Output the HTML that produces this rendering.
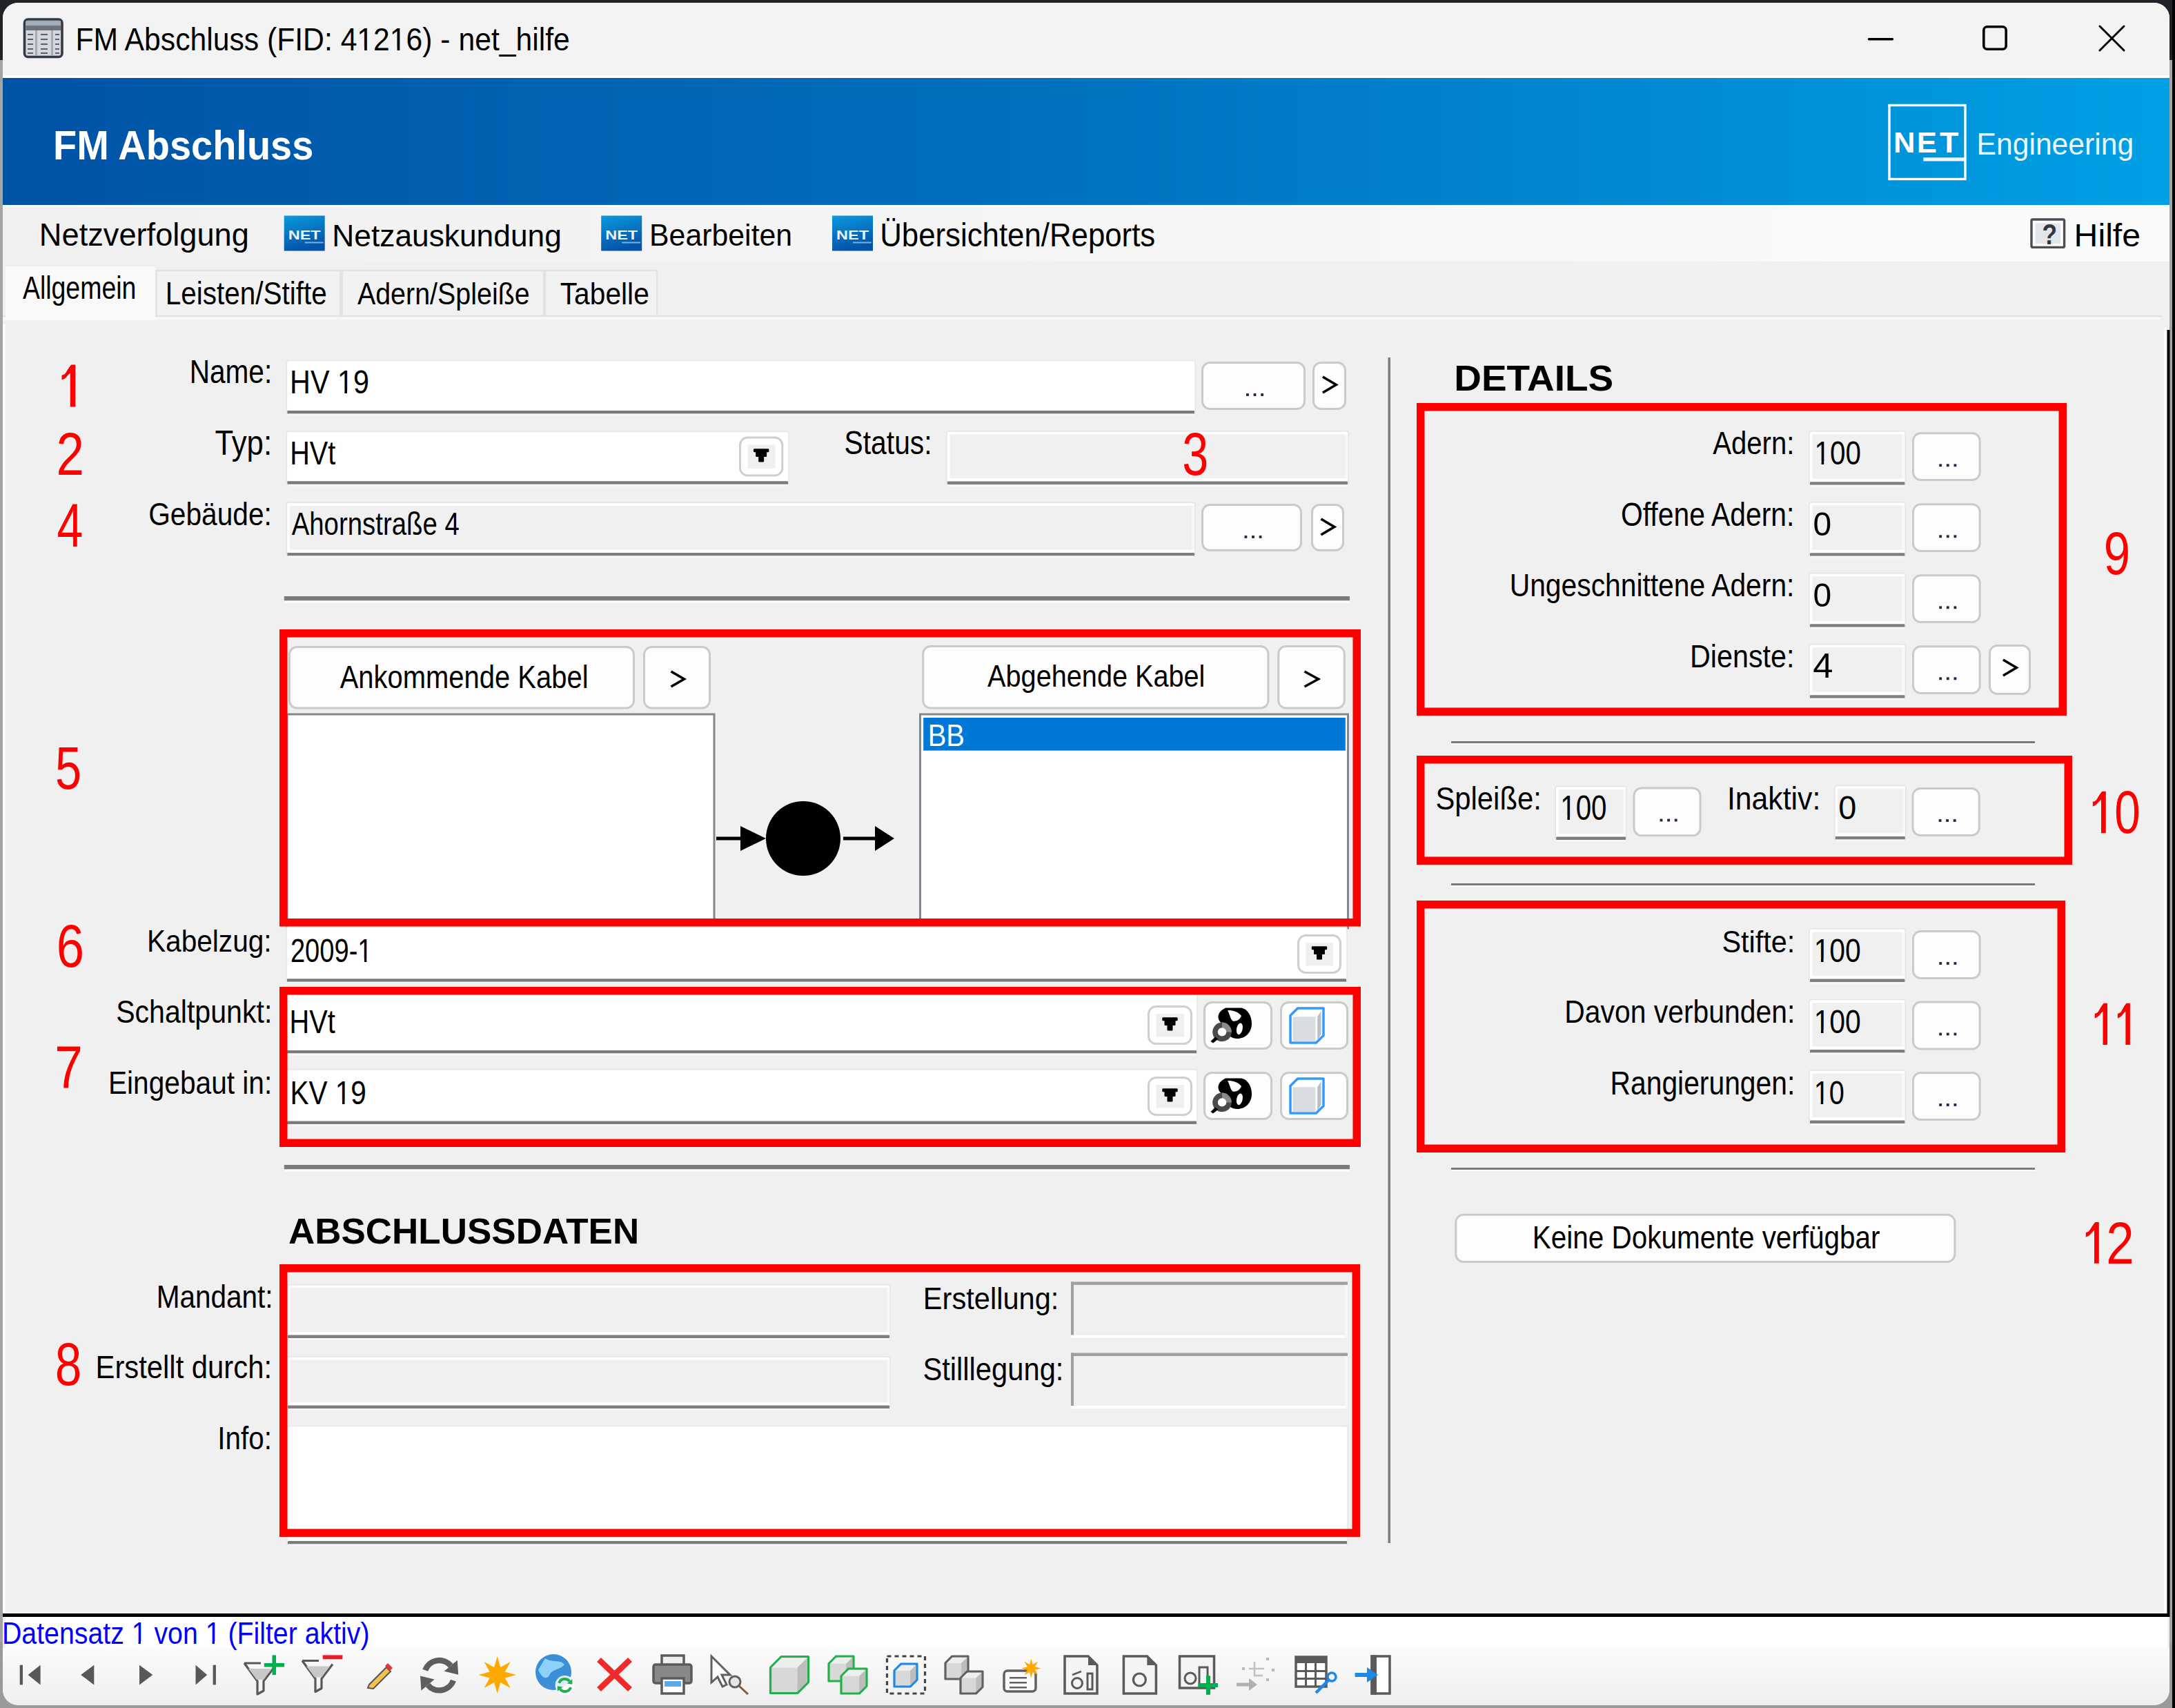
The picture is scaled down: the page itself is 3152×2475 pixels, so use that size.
<!DOCTYPE html>
<html><head><meta charset="utf-8"><title>FM Abschluss</title>
<style>html,body{margin:0;padding:0;background:#202020;overflow:hidden;width:3152px;height:2475px}svg{display:block}text{font-family:"Liberation Sans",sans-serif;white-space:pre}</style>
</head><body>
<svg width="3152" height="2475" viewBox="0 0 3152 2475" font-family="Liberation Sans, sans-serif">
<defs>
<linearGradient id="hdr" x1="0" y1="0" x2="1" y2="0">
 <stop offset="0" stop-color="#0052a4"/><stop offset="0.5" stop-color="#0072c0"/><stop offset="1" stop-color="#00a0e4"/>
</linearGradient>
<linearGradient id="menu" x1="0" y1="0" x2="1" y2="0">
 <stop offset="0" stop-color="#f0f0f0"/><stop offset="1" stop-color="#fbfbfb"/>
</linearGradient>
<linearGradient id="netico" x1="0" y1="0" x2="0.3" y2="1">
 <stop offset="0" stop-color="#0a9ae0"/><stop offset="1" stop-color="#0553a8"/>
</linearGradient>
<linearGradient id="tbar" x1="0" y1="0" x2="0" y2="1">
 <stop offset="0" stop-color="#fbfbfb"/><stop offset="1" stop-color="#efefef"/>
</linearGradient>
</defs>
<rect x="0" y="0" width="3152" height="2475" fill="#000000" />
<rect x="0" y="0" width="3148" height="87" fill="#1f2227" />
<rect x="0" y="87" width="4" height="2388" fill="#a3a3a3" />
<rect x="3144" y="87" width="4" height="2388" fill="#a3a3a3" />
<rect x="0" y="2380" width="3148" height="95" fill="#9a9a9a" />
<rect x="4" y="4" width="3140" height="2467" rx="22" fill="#f0f0f0"/>
<path d="M4 113 V26 A22 22 0 0 1 26 4 H3122 A22 22 0 0 1 3144 26 V113 Z" fill="#f3f3f3"/>
<rect x="4" y="109" width="3140" height="4" fill="#fcfcfc" />
<rect x="4" y="113" width="3140" height="184" fill="url(#hdr)" />
<rect x="4" y="297" width="3140" height="82" fill="url(#menu)" />
<rect x="4" y="297" width="3140" height="3" fill="#fdfdfd" />
<rect x="4" y="379" width="3140" height="83" fill="#f0f0f0" />
<rect x="35.5" y="28" width="54.5" height="54.5" rx="5" fill="#d3d7de" stroke="#343a45" stroke-width="3.6"/>
<rect x="37.5" y="30" width="50.5" height="7" fill="#a3acb9" />
<rect x="37.5" y="37" width="50.5" height="7" fill="#6c737e" />
<rect x="51" y="44" width="3" height="37" fill="#a8adb5" />
<rect x="74" y="44" width="3" height="37" fill="#a8adb5" />
<rect x="40" y="49" width="8" height="2" fill="#5b616a" />
<rect x="59" y="49" width="10" height="2" fill="#5b616a" />
<rect x="80" y="49" width="6" height="2" fill="#5b616a" />
<rect x="40" y="56" width="8" height="2" fill="#5b616a" />
<rect x="59" y="56" width="10" height="2" fill="#5b616a" />
<rect x="80" y="56" width="6" height="2" fill="#5b616a" />
<rect x="40" y="63" width="8" height="2" fill="#5b616a" />
<rect x="59" y="63" width="10" height="2" fill="#5b616a" />
<rect x="80" y="63" width="6" height="2" fill="#5b616a" />
<rect x="40" y="70" width="8" height="2" fill="#5b616a" />
<rect x="59" y="70" width="10" height="2" fill="#5b616a" />
<rect x="80" y="70" width="6" height="2" fill="#5b616a" />
<rect x="40" y="76" width="8" height="2" fill="#5b616a" />
<rect x="59" y="76" width="10" height="2" fill="#5b616a" />
<rect x="80" y="76" width="6" height="2" fill="#5b616a" />
<text x="109.48" y="73.30" font-size="45.93" font-weight="normal" fill="#000" textLength="716.34" lengthAdjust="spacingAndGlyphs" >FM Abschluss (FID: 41216) - net_hilfe</text>
<rect x="518.29" y="68.91" width="9.81" height="5.79" fill="#f3f3f3"/>
<rect x="531.88" y="68.91" width="9.59" height="5.79" fill="#f3f3f3"/>
<rect x="565.76" y="68.91" width="9.81" height="5.79" fill="#f3f3f3"/>
<rect x="579.35" y="68.91" width="9.59" height="5.79" fill="#f3f3f3"/>
<path d="M2708.5 56.8 H2742.5" stroke="#000" stroke-width="3.4" stroke-linecap="round"/>
<rect x="2874.8" y="38.8" width="32.4" height="32.4" rx="5" fill="none" stroke="#000" stroke-width="3.6"/>
<path d="M3043 38 L3078 73 M3078 38 L3043 73" stroke="#000" stroke-width="2.9" stroke-linecap="round"/>
<text x="77.12" y="231.40" font-size="60.14" font-weight="bold" fill="#ffffff" textLength="377.22" lengthAdjust="spacingAndGlyphs" >FM Abschluss</text>
<rect x="2738" y="152.5" width="110" height="107" fill="none" stroke="#ffffff" stroke-width="3.4"/>
<text x="2743.96" y="220.60" font-size="42.62" font-weight="bold" fill="#ffffff" textLength="31.47" lengthAdjust="spacingAndGlyphs" >N</text>
<text x="2777.85" y="220.60" font-size="42.62" font-weight="bold" fill="#ffffff" textLength="29.18" lengthAdjust="spacingAndGlyphs" >E</text>
<text x="2810.95" y="220.60" font-size="42.62" font-weight="bold" fill="#ffffff" textLength="27.44" lengthAdjust="spacingAndGlyphs" >T</text>
<rect x="2787.4" y="228.3" width="61.59999999999991" height="5.199999999999989" fill="#f0f8fd" />
<text x="2864.48" y="223.70" font-size="43.86" font-weight="normal" fill="#e8f6fd" textLength="227.79" lengthAdjust="spacingAndGlyphs" >Engineering</text>
<text x="56.87" y="356.00" font-size="45.52" font-weight="normal" fill="#000" textLength="304.01" lengthAdjust="spacingAndGlyphs" >Netzverfolgung</text>
<rect x="411.7" y="312.5" width="59" height="51" fill="url(#netico)"/>
<text x="417.7" y="346.5" font-size="19" font-weight="bold" fill="#e6f4fc" textLength="47" lengthAdjust="spacingAndGlyphs">NET</text>
<rect x="441.7" y="350.5" width="27.0" height="2.0" fill="#6fb6e8" />
<text x="481.35" y="356.70" font-size="45.24" font-weight="normal" fill="#000" textLength="332.45" lengthAdjust="spacingAndGlyphs" >Netzauskundung</text>
<rect x="871.2" y="312.5" width="59" height="51" fill="url(#netico)"/>
<text x="877.2" y="346.5" font-size="19" font-weight="bold" fill="#e6f4fc" textLength="47" lengthAdjust="spacingAndGlyphs">NET</text>
<rect x="901.2" y="350.5" width="27.0" height="2.0" fill="#6fb6e8" />
<text x="941.07" y="356.00" font-size="44.83" font-weight="normal" fill="#000" textLength="207.10" lengthAdjust="spacingAndGlyphs" >Bearbeiten</text>
<rect x="1206" y="312.5" width="59" height="51" fill="url(#netico)"/>
<text x="1212" y="346.5" font-size="19" font-weight="bold" fill="#e6f4fc" textLength="47" lengthAdjust="spacingAndGlyphs">NET</text>
<rect x="1236" y="350.5" width="27" height="2.0" fill="#6fb6e8" />
<text x="1275.21" y="356.60" font-size="47.76" font-weight="normal" fill="#000" textLength="399.05" lengthAdjust="spacingAndGlyphs" >Übersichten/Reports</text>
<rect x="2944" y="318" width="47.6" height="40.4" rx="2" fill="#fbfbfc" stroke="#4a4f56" stroke-width="3.4"/>
<rect x="2949.5" y="323.5" width="36.5" height="29.5" fill="#e2e5ea"/>
<text x="2959.61" y="353.70" font-size="43.01" font-weight="bold" fill="#33383e" textLength="21.55" lengthAdjust="spacingAndGlyphs" >?</text>
<text x="3005.62" y="356.70" font-size="46.48" font-weight="normal" fill="#000" textLength="96.45" lengthAdjust="spacingAndGlyphs" >Hilfe</text>
<rect x="226.7" y="392" width="266.6" height="66" fill="#f2f2f2" stroke="#e2e2e2" stroke-width="2.5"/>
<rect x="496" y="392" width="292" height="66" fill="#f2f2f2" stroke="#e2e2e2" stroke-width="2.5"/>
<rect x="790" y="392" width="162" height="66" fill="#f2f2f2" stroke="#e2e2e2" stroke-width="2.5"/>
<rect x="4" y="460" width="3140" height="1883" fill="#f0f0f0" />
<rect x="4" y="457" width="3129" height="2.5" fill="#e3e3e3" />
<rect x="4" y="459.5" width="3127" height="3.5" fill="#f8f8f8" />
<rect x="4" y="470" width="3.5" height="1868" fill="#ffffff" />
<rect x="3136" y="475" width="4" height="1863" fill="#ffffff" />
<rect x="3140.5" y="478" width="4.0" height="1865" fill="#000000" />
<rect x="4" y="2338" width="3140" height="5" fill="#000000" />
<rect x="8" y="384" width="216.8" height="80" fill="#f9f9f9"/>
<rect x="8" y="384" width="216.8" height="2" fill="#e9e9e9" />
<text x="32.91" y="433.00" font-size="45.52" font-weight="normal" fill="#000" textLength="164.48" lengthAdjust="spacingAndGlyphs" >Allgemein</text>
<text x="239.66" y="440.80" font-size="45.66" font-weight="normal" fill="#000" textLength="234.12" lengthAdjust="spacingAndGlyphs" >Leisten/Stifte</text>
<text x="517.90" y="441.00" font-size="44.69" font-weight="normal" fill="#000" textLength="249.86" lengthAdjust="spacingAndGlyphs" >Adern/Spleiße</text>
<text x="811.78" y="441.00" font-size="44.69" font-weight="normal" fill="#000" textLength="129.01" lengthAdjust="spacingAndGlyphs" >Tabelle</text>
<path d="M101.8 589.5 H109.3 V528.5 H103.3 C94.5 538.9 96.8 542.2 89.5 543.8 V550.5 C97.4 548.0 96.9 543.8 101.8 540.7 Z" fill="#ff0000"/>
<text x="81.56" y="687.50" font-size="87.31" font-weight="normal" fill="#ff0000" textLength="40.46" lengthAdjust="spacingAndGlyphs" >2</text>
<text x="82.47" y="791.50" font-size="88.29" font-weight="normal" fill="#ff0000" textLength="37.78" lengthAdjust="spacingAndGlyphs" >4</text>
<text x="80.06" y="1142.80" font-size="87.27" font-weight="normal" fill="#ff0000" textLength="38.05" lengthAdjust="spacingAndGlyphs" >5</text>
<text x="81.68" y="1401.10" font-size="87.89" font-weight="normal" fill="#ff0000" textLength="40.28" lengthAdjust="spacingAndGlyphs" >6</text>
<text x="79.25" y="1576.80" font-size="86.69" font-weight="normal" fill="#ff0000" textLength="40.58" lengthAdjust="spacingAndGlyphs" >7</text>
<text x="79.85" y="2007.00" font-size="87.89" font-weight="normal" fill="#ff0000" textLength="38.58" lengthAdjust="spacingAndGlyphs" >8</text>
<text x="274.65" y="555.00" font-size="48.00" font-weight="normal" fill="#000" textLength="119.52" lengthAdjust="spacingAndGlyphs" >Name:</text>
<text x="311.42" y="658.80" font-size="49.75" font-weight="normal" fill="#000" textLength="82.71" lengthAdjust="spacingAndGlyphs" >Typ:</text>
<text x="215.17" y="760.60" font-size="45.66" font-weight="normal" fill="#000" textLength="178.71" lengthAdjust="spacingAndGlyphs" >Gebäude:</text>
<text x="1223.56" y="658.30" font-size="48.46" font-weight="normal" fill="#000" textLength="127.02" lengthAdjust="spacingAndGlyphs" >Status:</text>
<text x="212.95" y="1379.20" font-size="45.24" font-weight="normal" fill="#000" textLength="180.72" lengthAdjust="spacingAndGlyphs" >Kabelzug:</text>
<text x="168.15" y="1482.10" font-size="46.62" font-weight="normal" fill="#000" textLength="226.19" lengthAdjust="spacingAndGlyphs" >Schaltpunkt:</text>
<text x="156.95" y="1584.50" font-size="45.38" font-weight="normal" fill="#000" textLength="237.34" lengthAdjust="spacingAndGlyphs" >Eingebaut in:</text>
<text x="226.66" y="1894.50" font-size="46.90" font-weight="normal" fill="#000" textLength="168.97" lengthAdjust="spacingAndGlyphs" >Mandant:</text>
<text x="138.55" y="1997.00" font-size="46.76" font-weight="normal" fill="#000" textLength="255.45" lengthAdjust="spacingAndGlyphs" >Erstellt durch:</text>
<text x="315.26" y="2099.60" font-size="45.67" font-weight="normal" fill="#000" textLength="78.61" lengthAdjust="spacingAndGlyphs" >Info:</text>
<text x="1337.87" y="1897.30" font-size="45.24" font-weight="normal" fill="#000" textLength="196.46" lengthAdjust="spacingAndGlyphs" >Erstellung:</text>
<text x="1337.42" y="2000.40" font-size="45.38" font-weight="normal" fill="#000" textLength="204.02" lengthAdjust="spacingAndGlyphs" >Stilllegung:</text>
<rect x="415.4" y="522.4" width="1316.6" height="77.20000000000005" rx="3" fill="#ffffff" stroke="#e6e6e6" stroke-width="1.5"/>
<rect x="416.4" y="595.1" width="1314.6" height="4.5" fill="#7a7a7a" rx="1"/>
<rect x="417.4" y="599.6" width="1312.6" height="3.0" fill="#f7f7f7" />
<text x="420.09" y="570.20" font-size="47.60" font-weight="normal" fill="#000" textLength="114.85" lengthAdjust="spacingAndGlyphs" >HV 19</text>
<rect x="489.80" y="565.68" width="9.57" height="5.92" fill="#ffffff"/>
<rect x="503.02" y="565.68" width="9.34" height="5.92" fill="#ffffff"/>
<rect x="1742.5" y="525.5" width="148" height="67" rx="11" fill="#fdfdfd" stroke="#cacaca" stroke-width="3"/>
<rect x="1806.0" y="570.1" width="3.8" height="3.8" fill="#3a1848"/>
<rect x="1816.6" y="570.1" width="3.8" height="3.8" fill="#3a1848"/>
<rect x="1827.2" y="570.1" width="3.8" height="3.8" fill="#3a1848"/>
<rect x="1903.5" y="525.5" width="46" height="67" rx="11" fill="#fdfdfd" stroke="#cacaca" stroke-width="3"/>
<path d="M1916.9 546 L1936.3 557.5 L1916.9 569" fill="none" stroke="#000" stroke-width="3.6" stroke-linejoin="miter" stroke-miterlimit="3"/>
<rect x="415.4" y="625.3" width="727.6" height="76.5" rx="3" fill="#ffffff" stroke="#e6e6e6" stroke-width="1.5"/>
<rect x="416.4" y="697.3" width="725.6" height="4.5" fill="#7a7a7a" rx="1"/>
<rect x="417.4" y="701.8" width="723.6" height="3.0" fill="#f7f7f7" />
<text x="420.23" y="673.10" font-size="48.15" font-weight="normal" fill="#000" textLength="66.05" lengthAdjust="spacingAndGlyphs" >HVt</text>
<rect x="1072.5" y="634.0" width="61.299999999999955" height="55.0" rx="11" fill="#ffffff" stroke="#cfcfcf" stroke-width="3"/>
<rect x="1083.5" y="644.5" width="39.799999999999955" height="34.5" fill="#efefef" />
<path d="M1093.15 651.5 H1113.15 V654.0 H1109.95 V660.7 H1105.95 V668.3 H1100.3500000000001 V660.7 H1096.3500000000001 V654.0 H1093.15 Z" fill="#000" stroke="#000" stroke-width="2.4" stroke-linejoin="round"/>
<rect x="1372" y="624.8" width="582" height="77.30000000000007" rx="3" fill="#ffffff" stroke="#e4e4e4" stroke-width="1.5"/>
<rect x="1376.5" y="629.3" width="573.0" height="63.80000000000007" fill="#f0f0f0" />
<rect x="1949" y="629.3" width="4" height="63.80000000000007" fill="#f7f7f7" />
<rect x="1373" y="697.6" width="580" height="4.5" fill="#7e7e7e" rx="1"/>
<rect x="1374" y="702.1" width="578" height="3.0" fill="#f7f7f7" />
<text x="1713.23" y="687.90" font-size="87.31" font-weight="normal" fill="#ff0000" textLength="38.05" lengthAdjust="spacingAndGlyphs" >3</text>
<rect x="415.4" y="728.2" width="1316.6" height="77.29999999999995" rx="3" fill="#ffffff" stroke="#e4e4e4" stroke-width="1.5"/>
<rect x="419.9" y="732.7" width="1307.6" height="63.799999999999955" fill="#f0f0f0" />
<rect x="1727" y="732.7" width="4" height="63.799999999999955" fill="#f7f7f7" />
<rect x="416.4" y="801.0" width="1314.6" height="4.5" fill="#7e7e7e" rx="1"/>
<rect x="417.4" y="805.5" width="1312.6" height="3.0" fill="#f7f7f7" />
<text x="422.70" y="775.30" font-size="45.66" font-weight="normal" fill="#000" textLength="243.11" lengthAdjust="spacingAndGlyphs" >Ahornstraße 4</text>
<rect x="1742.5" y="731.5" width="143" height="66" rx="11" fill="#fdfdfd" stroke="#cacaca" stroke-width="3"/>
<rect x="1803.5" y="776.1" width="3.8" height="3.8" fill="#3a1848"/>
<rect x="1814.1" y="776.1" width="3.8" height="3.8" fill="#3a1848"/>
<rect x="1824.7" y="776.1" width="3.8" height="3.8" fill="#3a1848"/>
<rect x="1901.5" y="731.5" width="45" height="66" rx="11" fill="#fdfdfd" stroke="#cacaca" stroke-width="3"/>
<path d="M1914.4 752 L1933.8 763.5 L1914.4 775" fill="none" stroke="#000" stroke-width="3.6" stroke-linejoin="miter" stroke-miterlimit="3"/>
<rect x="411.8" y="864" width="1544.2" height="6.5" fill="#7b7b7b" />
<rect x="411.8" y="870.5" width="1544.2" height="3.5" fill="#fbfbfb" />
<rect x="419.5" y="937.5" width="499" height="88.59999999999991" rx="11" fill="#fdfdfd" stroke="#cacaca" stroke-width="3"/>
<text x="492.70" y="996.60" font-size="45.52" font-weight="normal" fill="#000" textLength="359.82" lengthAdjust="spacingAndGlyphs" >Ankommende Kabel</text>
<rect x="933.5" y="937.5" width="95" height="88.59999999999991" rx="11" fill="#fdfdfd" stroke="#cacaca" stroke-width="3"/>
<path d="M972.5 973 L991.5 984.0 L972.5 995" fill="none" stroke="#000" stroke-width="3.6" stroke-linejoin="miter" stroke-miterlimit="3"/>
<rect x="1337.7" y="936.5" width="500.20000000000005" height="89.59999999999991" rx="11" fill="#fdfdfd" stroke="#cacaca" stroke-width="3"/>
<text x="1431.10" y="995.30" font-size="43.86" font-weight="normal" fill="#000" textLength="315.35" lengthAdjust="spacingAndGlyphs" >Abgehende Kabel</text>
<rect x="1852.7" y="936.5" width="95.59999999999991" height="89.59999999999991" rx="11" fill="#fdfdfd" stroke="#cacaca" stroke-width="3"/>
<path d="M1890.5 973 L1910.5 984.0 L1890.5 995" fill="none" stroke="#000" stroke-width="3.6" stroke-linejoin="miter" stroke-miterlimit="3"/>
<rect x="416" y="1035" width="619" height="310" fill="#ffffff" stroke="#82878f" stroke-width="3"/>
<rect x="1333.5" y="1035" width="620" height="310" fill="#ffffff" stroke="#82878f" stroke-width="3"/>
<rect x="1338.2" y="1040" width="611.5999999999999" height="47.59999999999991" fill="#0078d7" />
<text x="1344.71" y="1080.60" font-size="44.07" font-weight="normal" fill="#ffffff" textLength="53.25" lengthAdjust="spacingAndGlyphs" >BB</text>
<rect x="1038" y="1212.5" width="40" height="5.0" fill="#000" />
<path d="M1073 1197 L1110 1215 L1073 1233 Z" fill="#000"/>
<circle cx="1164" cy="1215" r="54" fill="#000"/>
<rect x="1222" y="1212.5" width="50" height="5.0" fill="#000" />
<path d="M1268 1197 L1296 1215 L1268 1233 Z" fill="#000"/>
<rect x="415" y="1343" width="1537" height="79.70000000000005" rx="3" fill="#ffffff" stroke="#e6e6e6" stroke-width="1.5"/>
<rect x="416" y="1418.2" width="1535" height="4.5" fill="#7a7a7a" rx="1"/>
<rect x="417" y="1422.7" width="1533" height="3.0" fill="#f7f7f7" />
<text x="420.89" y="1393.70" font-size="48.32" font-weight="normal" fill="#000" textLength="118.67" lengthAdjust="spacingAndGlyphs" >2009-1</text>
<rect x="518.97" y="1389.13" width="8.98" height="5.97" fill="#ffffff"/>
<rect x="531.32" y="1389.13" width="8.77" height="5.97" fill="#ffffff"/>
<rect x="1881.5" y="1355.5" width="61" height="54" rx="11" fill="#ffffff" stroke="#cfcfcf" stroke-width="3"/>
<rect x="1892.5" y="1366" width="39.5" height="33.5" fill="#efefef" />
<path d="M1902.0 1372.5 H1922.0 V1375.0 H1918.8 V1381.7 H1914.8 V1389.3 H1909.2 V1381.7 H1905.2 V1375.0 H1902.0 Z" fill="#000" stroke="#000" stroke-width="2.4" stroke-linejoin="round"/>
<rect x="415" y="1441" width="1320" height="85.5" rx="3" fill="#ffffff" stroke="#e6e6e6" stroke-width="1.5"/>
<rect x="416" y="1522.0" width="1318" height="4.5" fill="#7a7a7a" rx="1"/>
<rect x="417" y="1526.5" width="1316" height="3.0" fill="#f7f7f7" />
<text x="419.62" y="1496.60" font-size="47.71" font-weight="normal" fill="#000" textLength="66.26" lengthAdjust="spacingAndGlyphs" >HVt</text>
<rect x="1664.5" y="1458.5" width="62" height="54" rx="11" fill="#ffffff" stroke="#cfcfcf" stroke-width="3"/>
<rect x="1675.5" y="1469" width="40.5" height="33.5" fill="#efefef" />
<path d="M1685.5 1475.5 H1705.5 V1478.0 H1702.3 V1484.7 H1698.3 V1492.3 H1692.7 V1484.7 H1688.7 V1478.0 H1685.5 Z" fill="#000" stroke="#000" stroke-width="2.4" stroke-linejoin="round"/>
<rect x="415" y="1549.7" width="1320" height="79.20000000000005" rx="3" fill="#ffffff" stroke="#e6e6e6" stroke-width="1.5"/>
<rect x="416" y="1624.4" width="1318" height="4.5" fill="#7a7a7a" rx="1"/>
<rect x="417" y="1628.9" width="1316" height="3.0" fill="#f7f7f7" />
<text x="420.46" y="1599.50" font-size="48.03" font-weight="normal" fill="#000" textLength="110.44" lengthAdjust="spacingAndGlyphs" >KV 19</text>
<rect x="486.57" y="1594.95" width="9.42" height="5.95" fill="#ffffff"/>
<rect x="499.58" y="1594.95" width="9.21" height="5.95" fill="#ffffff"/>
<rect x="1664.5" y="1561.5" width="62" height="54" rx="11" fill="#ffffff" stroke="#cfcfcf" stroke-width="3"/>
<rect x="1675.5" y="1572" width="40.5" height="33.5" fill="#efefef" />
<path d="M1685.5 1578.5 H1705.5 V1581.0 H1702.3 V1587.7 H1698.3 V1595.3 H1692.7 V1587.7 H1688.7 V1581.0 H1685.5 Z" fill="#000" stroke="#000" stroke-width="2.4" stroke-linejoin="round"/>
<rect x="1745.5" y="1452.5" width="97" height="67" rx="11" fill="#fdfdfd" stroke="#cacaca" stroke-width="3"/>
<g transform="translate(1750,1455)"><path d="M26 5.5 H49 C58 7, 64 17, 64 28 C64 41, 55 50, 43 50 C35 50, 31 46, 29 42 L 28 30 C 21 29, 15 25, 15.5 18 C 16 12, 20 8.5, 26 5.5 Z" fill="#000"/><path d="M29 9 C 35 8.5, 45 11, 49 17 C 47 23, 41 25.5, 36.5 24.5 C 33 22, 32 14, 29 9 Z" fill="#fff"/><ellipse cx="46.4" cy="35.8" rx="4.3" ry="8.5" fill="#fff" transform="rotate(12 46.4 35.8)"/><circle cx="21" cy="40.4" r="13.8" fill="#4a4a4a"/><path d="M 21 26.6 A 13.8 13.8 0 0 1 34.8 40.4 L 27 40.4 A 6 6 0 0 0 21 34.4 Z" fill="#8a8a8a"/><circle cx="21" cy="40.4" r="6.2" fill="#fff"/><path d="M4.5 54 L 11 47.5 L 15.5 50.5 L 8 56.5 Z" fill="#000"/></g>
<rect x="1856.5" y="1452.5" width="96" height="67" rx="11" fill="#fdfdfd" stroke="#cacaca" stroke-width="3"/>
<path d="M1870 1471.56 L1880.56 1461 H1918 V1500.44 L1907.44 1511 H1870 Z" fill="#ffffff" stroke="#3399ff" stroke-width="3.5" stroke-linejoin="round"/>
<rect x="1873.5" y="1473.31" width="32.9" height="35.9" fill="#d9dde2"/>
<path d="M1909.2 1473.3 L1914.5 1465.2 V1498.7 L1909.2 1507.5 Z" fill="#b8bec6"/>
<rect x="1745.5" y="1554.5" width="97" height="67" rx="11" fill="#fdfdfd" stroke="#cacaca" stroke-width="3"/>
<g transform="translate(1750,1557)"><path d="M26 5.5 H49 C58 7, 64 17, 64 28 C64 41, 55 50, 43 50 C35 50, 31 46, 29 42 L 28 30 C 21 29, 15 25, 15.5 18 C 16 12, 20 8.5, 26 5.5 Z" fill="#000"/><path d="M29 9 C 35 8.5, 45 11, 49 17 C 47 23, 41 25.5, 36.5 24.5 C 33 22, 32 14, 29 9 Z" fill="#fff"/><ellipse cx="46.4" cy="35.8" rx="4.3" ry="8.5" fill="#fff" transform="rotate(12 46.4 35.8)"/><circle cx="21" cy="40.4" r="13.8" fill="#4a4a4a"/><path d="M 21 26.6 A 13.8 13.8 0 0 1 34.8 40.4 L 27 40.4 A 6 6 0 0 0 21 34.4 Z" fill="#8a8a8a"/><circle cx="21" cy="40.4" r="6.2" fill="#fff"/><path d="M4.5 54 L 11 47.5 L 15.5 50.5 L 8 56.5 Z" fill="#000"/></g>
<rect x="1856.5" y="1554.5" width="96" height="67" rx="11" fill="#fdfdfd" stroke="#cacaca" stroke-width="3"/>
<path d="M1870 1573.56 L1880.56 1563 H1918 V1602.44 L1907.44 1613 H1870 Z" fill="#ffffff" stroke="#3399ff" stroke-width="3.5" stroke-linejoin="round"/>
<rect x="1873.5" y="1575.31" width="32.9" height="35.9" fill="#d9dde2"/>
<path d="M1909.2 1575.3 L1914.5 1567.2 V1600.7 L1909.2 1609.5 Z" fill="#b8bec6"/>
<rect x="411.8" y="1688" width="1544.2" height="6.5" fill="#7b7b7b" />
<rect x="411.8" y="1694.5" width="1544.2" height="3.5" fill="#fbfbfb" />
<text x="417.98" y="1801.80" font-size="52.62" font-weight="bold" fill="#000" textLength="508.23" lengthAdjust="spacingAndGlyphs" >ABSCHLUSSDATEN</text>
<rect x="416" y="1861.7" width="874" height="77.29999999999995" rx="3" fill="#ffffff" stroke="#e4e4e4" stroke-width="1.5"/>
<rect x="420.5" y="1866.2" width="865.0" height="63.799999999999955" fill="#f0f0f0" />
<rect x="1285" y="1866.2" width="4" height="63.799999999999955" fill="#f7f7f7" />
<rect x="417" y="1934.5" width="872" height="4.5" fill="#7e7e7e" rx="1"/>
<rect x="418" y="1939" width="870" height="3" fill="#f7f7f7" />
<rect x="416" y="1966" width="874" height="75" rx="3" fill="#ffffff" stroke="#e4e4e4" stroke-width="1.5"/>
<rect x="420.5" y="1970.5" width="865.0" height="61.5" fill="#f0f0f0" />
<rect x="1285" y="1970.5" width="4" height="61.5" fill="#f7f7f7" />
<rect x="417" y="2036.5" width="872" height="4.5" fill="#7e7e7e" rx="1"/>
<rect x="418" y="2041" width="870" height="3" fill="#f7f7f7" />
<rect x="1552" y="1857.4" width="401" height="81.19999999999982" fill="#f0f0f0" />
<rect x="1552" y="1857.4" width="401" height="4.5" fill="#a0a0a0" />
<rect x="1552" y="1857.4" width="4" height="77.19999999999982" fill="#a0a0a0" />
<rect x="1552" y="1934.6" width="401" height="4.0" fill="#ffffff" />
<rect x="1949" y="1861.9" width="4" height="76.69999999999982" fill="#f8f8f8" />
<rect x="1552" y="1960.5" width="401" height="80.5" fill="#f0f0f0" />
<rect x="1552" y="1960.5" width="401" height="4.5" fill="#a0a0a0" />
<rect x="1552" y="1960.5" width="4" height="76.5" fill="#a0a0a0" />
<rect x="1552" y="2037" width="401" height="4" fill="#ffffff" />
<rect x="1949" y="1965.0" width="4" height="76.0" fill="#f8f8f8" />
<rect x="416" y="2066.4" width="1537" height="171.0999999999999" rx="3" fill="#ffffff" stroke="#e6e6e6" stroke-width="1.5"/>
<rect x="417" y="2233.0" width="1535" height="4.5" fill="#7a7a7a" rx="1"/>
<rect x="418" y="2237.5" width="1533" height="3.0" fill="#f7f7f7" />
<rect x="2011.5" y="518" width="3.5" height="1718" fill="#7d7d7d" />
<text x="2107.29" y="566.00" font-size="51.61" font-weight="bold" fill="#000" textLength="230.83" lengthAdjust="spacingAndGlyphs" >DETAILS</text>
<text x="2482.30" y="658.20" font-size="46.07" font-weight="normal" fill="#000" textLength="118.06" lengthAdjust="spacingAndGlyphs" >Adern:</text>
<rect x="2622" y="624.7" width="139.30000000000018" height="78.0" rx="3" fill="#ffffff" stroke="#e4e4e4" stroke-width="1.5"/>
<rect x="2626.5" y="629.2" width="130.30000000000018" height="64.5" fill="#f0f0f0" />
<rect x="2756.3" y="629.2" width="4.0" height="64.5" fill="#f7f7f7" />
<rect x="2623" y="698.2" width="137.30000000000018" height="4.5" fill="#7e7e7e" rx="1"/>
<rect x="2624" y="702.7" width="135.30000000000018" height="3.0" fill="#f7f7f7" />
<rect x="2772.5" y="627.8" width="96.69999999999982" height="67.70000000000005" rx="11" fill="#fdfdfd" stroke="#cacaca" stroke-width="3"/>
<rect x="2810.3" y="672.4" width="3.8" height="3.8" fill="#3a1848"/>
<rect x="2820.9" y="672.4" width="3.8" height="3.8" fill="#3a1848"/>
<rect x="2831.5" y="672.4" width="3.8" height="3.8" fill="#3a1848"/>
<text x="2348.96" y="762.00" font-size="47.17" font-weight="normal" fill="#000" textLength="251.44" lengthAdjust="spacingAndGlyphs" >Offene Adern:</text>
<rect x="2622" y="727.7" width="139.30000000000018" height="78.0" rx="3" fill="#ffffff" stroke="#e4e4e4" stroke-width="1.5"/>
<rect x="2626.5" y="732.2" width="130.30000000000018" height="64.5" fill="#f0f0f0" />
<rect x="2756.3" y="732.2" width="4.0" height="64.5" fill="#f7f7f7" />
<rect x="2623" y="801.2" width="137.30000000000018" height="4.5" fill="#7e7e7e" rx="1"/>
<rect x="2624" y="805.7" width="135.30000000000018" height="3.0" fill="#f7f7f7" />
<rect x="2772.5" y="730.8" width="96.69999999999982" height="67.70000000000005" rx="11" fill="#fdfdfd" stroke="#cacaca" stroke-width="3"/>
<rect x="2810.3" y="775.4" width="3.8" height="3.8" fill="#3a1848"/>
<rect x="2820.9" y="775.4" width="3.8" height="3.8" fill="#3a1848"/>
<rect x="2831.5" y="775.4" width="3.8" height="3.8" fill="#3a1848"/>
<text x="2187.74" y="864.20" font-size="46.07" font-weight="normal" fill="#000" textLength="412.67" lengthAdjust="spacingAndGlyphs" >Ungeschnittene Adern:</text>
<rect x="2622" y="830.7" width="139.30000000000018" height="78.0" rx="3" fill="#ffffff" stroke="#e4e4e4" stroke-width="1.5"/>
<rect x="2626.5" y="835.2" width="130.30000000000018" height="64.5" fill="#f0f0f0" />
<rect x="2756.3" y="835.2" width="4.0" height="64.5" fill="#f7f7f7" />
<rect x="2623" y="904.2" width="137.30000000000018" height="4.5" fill="#7e7e7e" rx="1"/>
<rect x="2624" y="908.7" width="135.30000000000018" height="3.0" fill="#f7f7f7" />
<rect x="2772.5" y="833.8" width="96.69999999999982" height="67.70000000000005" rx="11" fill="#fdfdfd" stroke="#cacaca" stroke-width="3"/>
<rect x="2810.3" y="878.4" width="3.8" height="3.8" fill="#3a1848"/>
<rect x="2820.9" y="878.4" width="3.8" height="3.8" fill="#3a1848"/>
<rect x="2831.5" y="878.4" width="3.8" height="3.8" fill="#3a1848"/>
<text x="2448.99" y="967.20" font-size="46.07" font-weight="normal" fill="#000" textLength="151.47" lengthAdjust="spacingAndGlyphs" >Dienste:</text>
<rect x="2622" y="933.7" width="139.30000000000018" height="78.0" rx="3" fill="#ffffff" stroke="#e4e4e4" stroke-width="1.5"/>
<rect x="2626.5" y="938.2" width="130.30000000000018" height="64.5" fill="#f0f0f0" />
<rect x="2756.3" y="938.2" width="4.0" height="64.5" fill="#f7f7f7" />
<rect x="2623" y="1007.2" width="137.30000000000018" height="4.5" fill="#7e7e7e" rx="1"/>
<rect x="2624" y="1011.7" width="135.30000000000018" height="3.0" fill="#f7f7f7" />
<rect x="2772.5" y="936.8" width="96.69999999999982" height="67.70000000000005" rx="11" fill="#fdfdfd" stroke="#cacaca" stroke-width="3"/>
<rect x="2810.3" y="981.4" width="3.8" height="3.8" fill="#3a1848"/>
<rect x="2820.9" y="981.4" width="3.8" height="3.8" fill="#3a1848"/>
<rect x="2831.5" y="981.4" width="3.8" height="3.8" fill="#3a1848"/>
<text x="2629.47" y="673.00" font-size="48.60" font-weight="normal" fill="#000" textLength="67.38" lengthAdjust="spacingAndGlyphs" >100</text>
<rect x="2630.23" y="668.40" width="9.39" height="6.00" fill="#f0f0f0"/>
<rect x="2643.20" y="668.40" width="9.18" height="6.00" fill="#f0f0f0"/>
<text x="2627.38" y="776.00" font-size="48.60" font-weight="normal" fill="#000" textLength="26.67" lengthAdjust="spacingAndGlyphs" >0</text>
<text x="2627.38" y="879.00" font-size="48.60" font-weight="normal" fill="#000" textLength="26.67" lengthAdjust="spacingAndGlyphs" >0</text>
<text x="2627.32" y="982.00" font-size="49.31" font-weight="normal" fill="#000" textLength="29.19" lengthAdjust="spacingAndGlyphs" >4</text>
<rect x="2883.5" y="935.5" width="58" height="70" rx="11" fill="#fdfdfd" stroke="#cacaca" stroke-width="3"/>
<path d="M2902.9 956 L2922.3 967.5 L2902.9 979" fill="none" stroke="#000" stroke-width="3.6" stroke-linejoin="miter" stroke-miterlimit="3"/>
<rect x="2103" y="1074" width="846" height="3" fill="#7a7a7a" />
<rect x="2103" y="1077" width="846" height="2" fill="#fafafa" />
<text x="2080.42" y="1172.80" font-size="45.93" font-weight="normal" fill="#000" textLength="153.39" lengthAdjust="spacingAndGlyphs" >Spleiße:</text>
<rect x="2254.2" y="1139.5" width="102.80000000000018" height="77.5" rx="3" fill="#ffffff" stroke="#e4e4e4" stroke-width="1.5"/>
<rect x="2258.7" y="1144.0" width="93.80000000000018" height="64.0" fill="#f0f0f0" />
<rect x="2352" y="1144.0" width="4" height="64.0" fill="#f7f7f7" />
<rect x="2255.2" y="1212.5" width="100.80000000000018" height="4.5" fill="#7e7e7e" rx="1"/>
<rect x="2256.2" y="1217" width="98.80000000000018" height="3" fill="#f7f7f7" />
<text x="2261.28" y="1188.00" font-size="49.32" font-weight="normal" fill="#000" textLength="67.28" lengthAdjust="spacingAndGlyphs" >100</text>
<rect x="2262.03" y="1183.35" width="9.38" height="6.05" fill="#f0f0f0"/>
<rect x="2274.98" y="1183.35" width="9.17" height="6.05" fill="#f0f0f0"/>
<rect x="2368.0" y="1142.0" width="96.09999999999991" height="68.79999999999995" rx="11" fill="#fdfdfd" stroke="#cacaca" stroke-width="3"/>
<rect x="2405.6" y="1186.6" width="3.8" height="3.8" fill="#3a1848"/>
<rect x="2416.2" y="1186.6" width="3.8" height="3.8" fill="#3a1848"/>
<rect x="2426.8" y="1186.6" width="3.8" height="3.8" fill="#3a1848"/>
<text x="2502.95" y="1173.30" font-size="45.66" font-weight="normal" fill="#000" textLength="135.32" lengthAdjust="spacingAndGlyphs" >Inaktiv:</text>
<rect x="2658.8" y="1138.4" width="103.0" height="78.09999999999991" rx="3" fill="#ffffff" stroke="#e4e4e4" stroke-width="1.5"/>
<rect x="2663.3" y="1142.9" width="94.0" height="64.59999999999991" fill="#f0f0f0" />
<rect x="2756.8" y="1142.9" width="4.0" height="64.59999999999991" fill="#f7f7f7" />
<rect x="2659.8" y="1212.0" width="101.0" height="4.5" fill="#7e7e7e" rx="1"/>
<rect x="2660.8" y="1216.5" width="99.0" height="3.0" fill="#f7f7f7" />
<text x="2664.32" y="1187.00" font-size="47.31" font-weight="normal" fill="#000" textLength="26.09" lengthAdjust="spacingAndGlyphs" >0</text>
<rect x="2772.0" y="1142.5" width="96.30000000000018" height="68" rx="11" fill="#fdfdfd" stroke="#cacaca" stroke-width="3"/>
<rect x="2809.7" y="1187.1" width="3.8" height="3.8" fill="#3a1848"/>
<rect x="2820.2" y="1187.1" width="3.8" height="3.8" fill="#3a1848"/>
<rect x="2830.8" y="1187.1" width="3.8" height="3.8" fill="#3a1848"/>
<rect x="2103" y="1280" width="846" height="3" fill="#7a7a7a" />
<rect x="2103" y="1283" width="846" height="2" fill="#fafafa" />
<text x="2495.44" y="1379.70" font-size="44.28" font-weight="normal" fill="#000" textLength="105.86" lengthAdjust="spacingAndGlyphs" >Stifte:</text>
<rect x="2622" y="1346.0" width="139.30000000000018" height="77.0" rx="3" fill="#ffffff" stroke="#e4e4e4" stroke-width="1.5"/>
<rect x="2626.5" y="1350.5" width="130.30000000000018" height="63.5" fill="#f0f0f0" />
<rect x="2756.3" y="1350.5" width="4.0" height="63.5" fill="#f7f7f7" />
<rect x="2623" y="1418.5" width="137.30000000000018" height="4.5" fill="#7e7e7e" rx="1"/>
<rect x="2624" y="1423.0" width="135.30000000000018" height="3.0" fill="#f7f7f7" />
<rect x="2772.5" y="1349.5" width="96.69999999999982" height="68.0" rx="11" fill="#fdfdfd" stroke="#cacaca" stroke-width="3"/>
<rect x="2810.3" y="1394.1" width="3.8" height="3.8" fill="#3a1848"/>
<rect x="2820.9" y="1394.1" width="3.8" height="3.8" fill="#3a1848"/>
<rect x="2831.5" y="1394.1" width="3.8" height="3.8" fill="#3a1848"/>
<text x="2628.63" y="1394.00" font-size="48.75" font-weight="normal" fill="#000" textLength="68.24" lengthAdjust="spacingAndGlyphs" >100</text>
<rect x="2629.43" y="1389.39" width="9.49" height="6.01" fill="#f0f0f0"/>
<rect x="2642.53" y="1389.39" width="9.27" height="6.01" fill="#f0f0f0"/>
<text x="2267.33" y="1482.10" font-size="45.66" font-weight="normal" fill="#000" textLength="333.95" lengthAdjust="spacingAndGlyphs" >Davon verbunden:</text>
<rect x="2622" y="1448.5" width="139.30000000000018" height="77.0" rx="3" fill="#ffffff" stroke="#e4e4e4" stroke-width="1.5"/>
<rect x="2626.5" y="1453.0" width="130.30000000000018" height="63.5" fill="#f0f0f0" />
<rect x="2756.3" y="1453.0" width="4.0" height="63.5" fill="#f7f7f7" />
<rect x="2623" y="1521.0" width="137.30000000000018" height="4.5" fill="#7e7e7e" rx="1"/>
<rect x="2624" y="1525.5" width="135.30000000000018" height="3.0" fill="#f7f7f7" />
<rect x="2772.5" y="1452.0" width="96.69999999999982" height="68.0" rx="11" fill="#fdfdfd" stroke="#cacaca" stroke-width="3"/>
<rect x="2810.3" y="1496.6" width="3.8" height="3.8" fill="#3a1848"/>
<rect x="2820.9" y="1496.6" width="3.8" height="3.8" fill="#3a1848"/>
<rect x="2831.5" y="1496.6" width="3.8" height="3.8" fill="#3a1848"/>
<text x="2628.63" y="1496.60" font-size="48.89" font-weight="normal" fill="#000" textLength="68.24" lengthAdjust="spacingAndGlyphs" >100</text>
<rect x="2629.43" y="1491.98" width="9.49" height="6.02" fill="#f0f0f0"/>
<rect x="2642.53" y="1491.98" width="9.27" height="6.02" fill="#f0f0f0"/>
<text x="2333.53" y="1585.70" font-size="47.17" font-weight="normal" fill="#000" textLength="267.77" lengthAdjust="spacingAndGlyphs" >Rangierungen:</text>
<rect x="2622" y="1551.0" width="139.30000000000018" height="77.0" rx="3" fill="#ffffff" stroke="#e4e4e4" stroke-width="1.5"/>
<rect x="2626.5" y="1555.5" width="130.30000000000018" height="63.5" fill="#f0f0f0" />
<rect x="2756.3" y="1555.5" width="4.0" height="63.5" fill="#f7f7f7" />
<rect x="2623" y="1623.5" width="137.30000000000018" height="4.5" fill="#7e7e7e" rx="1"/>
<rect x="2624" y="1628.0" width="135.30000000000018" height="3.0" fill="#f7f7f7" />
<rect x="2772.5" y="1554.5" width="96.69999999999982" height="68.0" rx="11" fill="#fdfdfd" stroke="#cacaca" stroke-width="3"/>
<rect x="2810.3" y="1599.1" width="3.8" height="3.8" fill="#3a1848"/>
<rect x="2820.9" y="1599.1" width="3.8" height="3.8" fill="#3a1848"/>
<rect x="2831.5" y="1599.1" width="3.8" height="3.8" fill="#3a1848"/>
<text x="2628.72" y="1600.00" font-size="48.75" font-weight="normal" fill="#000" textLength="44.16" lengthAdjust="spacingAndGlyphs" >10</text>
<rect x="2629.44" y="1595.39" width="9.27" height="6.01" fill="#f0f0f0"/>
<rect x="2642.21" y="1595.39" width="9.06" height="6.01" fill="#f0f0f0"/>
<rect x="2103" y="1692" width="846" height="3" fill="#7a7a7a" />
<rect x="2103" y="1695" width="846" height="2" fill="#fafafa" />
<rect x="2109.8" y="1760.3" width="723.0999999999999" height="68.20000000000005" rx="11" fill="#fdfdfd" stroke="#cacaca" stroke-width="3"/>
<text x="2220.76" y="1809.20" font-size="46.21" font-weight="normal" fill="#000" textLength="503.83" lengthAdjust="spacingAndGlyphs" >Keine Dokumente verfügbar</text>
<text x="3048.72" y="832.00" font-size="87.60" font-weight="normal" fill="#ff0000" textLength="38.36" lengthAdjust="spacingAndGlyphs" >9</text>
<path d="M3045.0 1207.2 H3051.8 V1146.7 H3046.4 C3037.7 1157.0 3040.1 1160.3 3032.8 1161.8 V1168.5 C3040.7 1166.1 3040.2 1161.8 3045.0 1158.8 Z" fill="#ff0000"/>
<text x="3064.20" y="1207.20" font-size="86.74" font-weight="normal" fill="#ff0000" textLength="37.51" lengthAdjust="spacingAndGlyphs" >0</text>
<path d="M3047.5 1514 H3054 V1453.8 H3048.8 C3040.3 1464.0 3042.9 1467.3 3035.7 1468.8 V1475.5 C3043.5 1473.1 3042.7 1468.8 3047.5 1465.8 Z" fill="#ff0000"/>
<path d="M3080.4 1514 H3086.9 V1453.8 H3081.7 C3073.2 1464.0 3076.1 1467.3 3068.9 1468.8 V1475.5 C3076.7 1473.1 3075.6 1468.8 3080.4 1465.8 Z" fill="#ff0000"/>
<path d="M3035.0 1830.8 H3041.8 V1770.9 H3036.4 C3027.8 1781.1 3030.0 1784.4 3022.8 1785.9 V1792.5 C3030.6 1790.1 3030.2 1785.9 3035.0 1782.9 Z" fill="#ff0000"/>
<text x="3052.36" y="1830.80" font-size="85.88" font-weight="normal" fill="#ff0000" textLength="40.46" lengthAdjust="spacingAndGlyphs" >2</text>
<rect x="410.75" y="917.75" width="1555.5" height="419.0" fill="none" stroke="#ff0000" stroke-width="11.5"/>
<rect x="410.75" y="1435.75" width="1555.5" height="220.5" fill="none" stroke="#ff0000" stroke-width="11.5"/>
<rect x="410.75" y="1837.75" width="1554.5" height="383.5" fill="none" stroke="#ff0000" stroke-width="11.5"/>
<rect x="2058.75" y="589.75" width="930.5" height="441.5" fill="none" stroke="#ff0000" stroke-width="11.5"/>
<rect x="2058.75" y="1100.75" width="938.5" height="146.5" fill="none" stroke="#ff0000" stroke-width="11.5"/>
<rect x="2058.75" y="1310.75" width="928.5" height="353.5" fill="none" stroke="#ff0000" stroke-width="11.5"/>
<rect x="8" y="2343" width="3133" height="45" fill="#ffffff" />
<path d="M4 2388 H3144 V2448 A22 22 0 0 1 3122 2470 H26 A22 22 0 0 1 4 2448 Z" fill="url(#tbar)"/>
<text x="2.96" y="2382.40" font-size="44.69" font-weight="normal" fill="#0000ff" textLength="532.54" lengthAdjust="spacingAndGlyphs" >Datensatz 1 von 1 (Filter aktiv)</text>
<rect x="191.36" y="2378.11" width="9.19" height="5.69" fill="#ffffff"/>
<rect x="204.03" y="2378.11" width="8.98" height="5.69" fill="#ffffff"/>
<rect x="298.34" y="2378.11" width="9.19" height="5.69" fill="#ffffff"/>
<rect x="311.00" y="2378.11" width="8.98" height="5.69" fill="#ffffff"/>
<rect x="28.7" y="2412.7" width="4.300000000000001" height="28.700000000000273" fill="#585858" />
<path d="M40.6 2427 L58.6 2412.7 V2441.4 Z" fill="#585858"/>
<path d="M117.2 2427 L136.3 2412.7 V2441.4 Z" fill="#585858"/>
<path d="M221.3 2427 L202 2412.7 V2441.4 Z" fill="#585858"/>
<path d="M300.2 2427 L283.5 2412.7 V2441.4 Z" fill="#585858"/>
<rect x="308.6" y="2412.7" width="4.2999999999999545" height="28.700000000000273" fill="#585858" />
<path d="M354 2410 H378 M354 2410 L373 2436 V2455 L382 2450 V2436 L398 2415" fill="none" stroke="#585858" stroke-width="3.2" stroke-linejoin="round"/>
<path d="M360 2418 H394 L382 2434 H372 Z" fill="#c8c8c8"/>
<path d="M438 2406.5 H462 M438 2406.5 L457 2432.5 V2451.5 L466 2446.5 V2432.5 L482 2411.5" fill="none" stroke="#585858" stroke-width="3.2" stroke-linejoin="round"/>
<path d="M444 2414.5 H478 L466 2430.5 H456 Z" fill="#c8c8c8"/>
<rect x="394.5" y="2398.4" width="5.5" height="28.59999999999991" fill="#00b04f" />
<rect x="382.8" y="2410" width="29.19999999999999" height="5.5" fill="#00b04f" />
<rect x="467.7" y="2398.4" width="28.69999999999999" height="5.900000000000091" fill="#ee1c24" />
<path d="M535 2441 L560 2416 L566 2422 L541 2447 L533 2446 Z" fill="#f5c04a" stroke="#555" stroke-width="2"/>
<path d="M558 2414 L562 2410 L569 2417 L565 2421 Z" fill="#e8323c"/>
<path d="M616.2 2420.3 A 21.7 21.7 0 0 1 653.2 2413.8" fill="none" stroke="#5e5e5e" stroke-width="8.4"/>
<path d="M664.2 2426.8 L662.8 2405.7 L643.6 2421.8 Z" fill="#5e5e5e"/>
<path d="M657.0 2435.1 A 21.7 21.7 0 0 1 620.0 2441.6" fill="none" stroke="#5e5e5e" stroke-width="8.4"/>
<path d="M609.0 2428.6 L610.4 2449.7 L629.6 2433.6 Z" fill="#5e5e5e"/>
<polygon points="720.7,2400.0 725.3,2415.9 739.8,2407.9 731.8,2422.4 747.7,2427.0 731.8,2431.6 739.8,2446.1 725.3,2438.1 720.7,2454.0 716.1,2438.1 701.6,2446.1 709.6,2431.6 693.7,2427.0 709.6,2422.4 701.6,2407.9 716.1,2415.9" fill="#ffa800"/>
<circle cx="802" cy="2423" r="26" fill="#3b8fd6"/>
<path d="M790 2403 C 800 2410, 812 2404, 818 2412 C 812 2420, 800 2418, 796 2428 C 790 2436, 784 2428, 780 2420 Z" fill="#8fd0f6"/>
<circle cx="818.6" cy="2442" r="14" fill="#ffffff" opacity="0.85"/>
<path d="M810.1 2438.9 A 9 9 0 0 1 825.5 2436.2" fill="none" stroke="#22b04a" stroke-width="4"/>
<path d="M829.4 2440.8 L829.3 2433.0 L821.7 2439.4 Z" fill="#22b04a"/>
<path d="M827.1 2445.1 A 9 9 0 0 1 811.7 2447.8" fill="none" stroke="#22b04a" stroke-width="4"/>
<path d="M807.8 2443.2 L807.9 2451.0 L815.5 2444.6 Z" fill="#22b04a"/>
<path d="M868 2405 L913 2448 M913 2405 L868 2448" stroke="#ee2a2a" stroke-width="8.5"/>
<rect x="959" y="2399" width="32" height="14" fill="#eee" stroke="#5a5a5a" stroke-width="3.5"/>
<rect x="947" y="2412" width="55" height="27" rx="3" fill="#888" stroke="#5a5a5a" stroke-width="3.5"/>
<rect x="959" y="2432" width="32" height="22" fill="#fff" stroke="#5a5a5a" stroke-width="3.5"/>
<rect x="963" y="2436" width="24" height="8" fill="#5aa8e8" />
<path d="M1031 2400 V2438 L1040 2430 L1047 2444 L1053 2441 L1046 2427 L1058 2427 Z" fill="#fff" stroke="#606060" stroke-width="3"/>
<circle cx="1065" cy="2437" r="8" fill="#e6e6e6" stroke="#606060" stroke-width="3"/>
<path d="M1071 2443 L1084 2455" stroke="#7a5a3a" stroke-width="3"/>
<path d="M1116.5 2416.4 L1132.4 2400.5 H1171.5 V2437.6 L1155.6 2453.5 H1116.5 Z" fill="#d8d8d8" stroke="#22b04a" stroke-width="3.2" stroke-linejoin="round"/>
<path d="M1118.5 2416.4 L1132.4 2402.5 H1168.5 L1155.6 2416.4 Z" fill="#eeeeee"/>
<path d="M1155.6 2416.4 L1169.5 2403.5 V2437.6 L1155.6 2451.5 Z" fill="#bdbdbd"/>
<path d="M1201 2410.8 L1211.8 2400 H1237 V2425.2 L1226.2 2436 H1201 Z" fill="#d8d8d8" stroke="#22b04a" stroke-width="3.2" stroke-linejoin="round"/>
<path d="M1203 2410.8 L1211.8 2402 H1234 L1226.2 2410.8 Z" fill="#eeeeee"/>
<path d="M1226.2 2410.8 L1235 2403 V2425.2 L1226.2 2434 Z" fill="#bdbdbd"/>
<path d="M1219 2428.8 L1229.8 2418 H1256 V2443.2 L1245.2 2454 H1219 Z" fill="#d8d8d8" stroke="#22b04a" stroke-width="3.2" stroke-linejoin="round"/>
<path d="M1221 2428.8 L1229.8 2420 H1253 L1245.2 2428.8 Z" fill="#eeeeee"/>
<path d="M1245.2 2428.8 L1254 2421 V2443.2 L1245.2 2452 Z" fill="#bdbdbd"/>
<rect x="1285.5" y="2400" width="55" height="54" fill="none" stroke="#444" stroke-width="3.2" stroke-dasharray="6 5"/>
<path d="M1296 2420.9 L1305.9 2411 H1329 V2434.1 L1319.1 2444 H1296 Z" fill="#d8d8d8" stroke="#1e88e5" stroke-width="3.2" stroke-linejoin="round"/>
<path d="M1298 2420.9 L1305.9 2413 H1326 L1319.1 2420.9 Z" fill="#eeeeee"/>
<path d="M1319.1 2420.9 L1327 2414 V2434.1 L1319.1 2442 Z" fill="#bdbdbd"/>
<path d="M1370 2409.9 L1379.9 2400 H1403 V2423.1 L1393.1 2433 H1370 Z" fill="#d8d8d8" stroke="#606060" stroke-width="3.2" stroke-linejoin="round"/>
<path d="M1372 2409.9 L1379.9 2402 H1400 L1393.1 2409.9 Z" fill="#eeeeee"/>
<path d="M1393.1 2409.9 L1401 2403 V2423.1 L1393.1 2431 Z" fill="#bdbdbd"/>
<path d="M1392 2431.6 L1401.6 2422 H1424 V2444.4 L1414.4 2454 H1392 Z" fill="#d8d8d8" stroke="#606060" stroke-width="3.2" stroke-linejoin="round"/>
<path d="M1394 2431.6 L1401.6 2424 H1421 L1414.4 2431.6 Z" fill="#eeeeee"/>
<path d="M1414.4 2431.6 L1422 2425 V2444.4 L1414.4 2452 Z" fill="#bdbdbd"/>
<rect x="1455" y="2421" width="46" height="30" rx="5" fill="#fafafa" stroke="#606060" stroke-width="3.5"/>
<rect x="1463" y="2430" width="25" height="2.5" fill="#606060" />
<rect x="1463" y="2437" width="25" height="2.5" fill="#606060" />
<rect x="1463" y="2444" width="25" height="2.5" fill="#606060" />
<polygon points="1494.3,2403.5 1496.6,2412.0 1504.2,2407.6 1499.8,2415.2 1508.3,2417.5 1499.8,2419.8 1504.2,2427.4 1496.6,2423.0 1494.3,2431.5 1492.0,2423.0 1484.4,2427.4 1488.8,2419.8 1480.3,2417.5 1488.8,2415.2 1484.4,2407.6 1492.0,2412.0" fill="#ffa800"/>
<path d="M1543 2400 H1577 L1590 2413 V2454 H1543 Z" fill="#f4f4f4" stroke="#5a5a5a" stroke-width="3.5"/>
<path d="M1577 2400 V2413 H1590 Z" fill="#5a5a5a"/>
<circle cx="1561" cy="2439" r="7.5" fill="none" stroke="#5a5a5a" stroke-width="3"/>
<rect x="1576" y="2425" width="7" height="23" fill="none" stroke="#5a5a5a" stroke-width="3"/>
<path d="M1554 2427 L1567 2422" stroke="#5a5a5a" stroke-width="2.5"/>
<path d="M1628.4 2400 H1662.4 L1675.4 2413 V2454 H1628.4 Z" fill="#f4f4f4" stroke="#5a5a5a" stroke-width="3.5"/>
<path d="M1662.4 2400 V2413 H1675.4 Z" fill="#5a5a5a"/>
<circle cx="1651.4" cy="2434" r="9" fill="none" stroke="#5a5a5a" stroke-width="3.2"/>
<rect x="1709.5" y="2400" width="50" height="46" fill="#f4f4f4" stroke="#5a5a5a" stroke-width="3.5"/>
<circle cx="1725" cy="2432" r="8" fill="none" stroke="#5a5a5a" stroke-width="3"/>
<path d="M1738 2444 V2416 H1750 V2430" fill="none" stroke="#5a5a5a" stroke-width="3"/>
<rect x="1748" y="2428.3" width="6" height="27.5" fill="#00b04f" />
<rect x="1736.4" y="2439" width="28.59999999999991" height="6" fill="#00b04f" />
<path d="M1792 2441 H1814" stroke="#b0b0b0" stroke-width="5"/>
<path d="M1810 2432 L1822 2441 L1810 2450 Z" fill="#b0b0b0"/>
<path d="M1810 2418 H1832 M1818 2408 V2428 H1830" fill="none" stroke="#c0c0c0" stroke-width="2.5"/>
<rect x="1800" y="2416" width="4" height="4" fill="#b8b8b8" />
<rect x="1835" y="2402" width="4" height="4" fill="#b8b8b8" />
<rect x="1843" y="2418" width="4" height="4" fill="#b8b8b8" />
<rect x="1835" y="2432" width="4" height="4" fill="#b8b8b8" />
<rect x="1878" y="2401" width="44" height="43" fill="#fff" stroke="#5a5a5a" stroke-width="3.5"/>
<rect x="1878" y="2401" width="44" height="9" fill="#5a5a5a" />
<rect x="1878" y="2420" width="44" height="3" fill="#5a5a5a" />
<rect x="1878" y="2431" width="44" height="3" fill="#5a5a5a" />
<rect x="1891" y="2401" width="3" height="43" fill="#5a5a5a" />
<rect x="1905" y="2401" width="3" height="43" fill="#5a5a5a" />
<path d="M1907 2453 L1927 2433" stroke="#1e88e5" stroke-width="4.5"/>
<circle cx="1930" cy="2430" r="6" fill="none" stroke="#1e88e5" stroke-width="3.5"/>
<rect x="1988" y="2400" width="26" height="54" fill="#fff" stroke="#5a5a5a" stroke-width="3.5"/>
<rect x="1986.5" y="2398.4" width="8.5" height="57.40000000000009" fill="#5a5a5a" />
<path d="M1963.6 2427 H1985" stroke="#1e88e5" stroke-width="6"/>
<path d="M1981 2416 L1997 2427 L1981 2438 Z" fill="#1e88e5"/>
</svg>
</body></html>
